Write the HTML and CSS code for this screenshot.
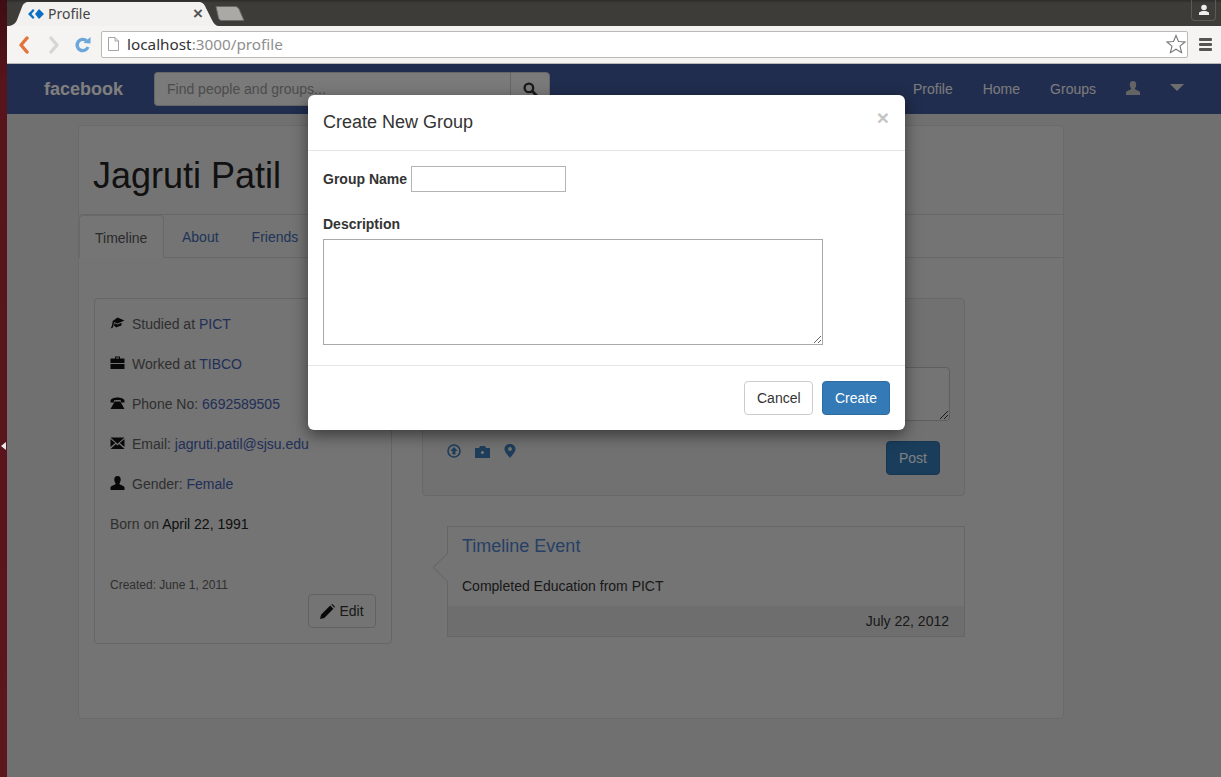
FILE: index.html
```html
<!DOCTYPE html>
<html lang="en">
<head>
<meta charset="utf-8">
<title>Profile</title>
<link rel="stylesheet" href="styles.css">
</head>
<body>
<div class="desktop">
  <aside class="launcher"><span class="launcher-arrow"></span></aside>
  <div class="browser">
    <div class="tabstrip">
      <div class="tab">
        <svg class="tab-shape" width="212" height="26" viewBox="0 0 212 26"><path d="M0 26 C5 26 8 24 10 20 L15 7 C16 4 18 2 22 2 L192 2 C195 2 197 4 198 6 L205 20 C207 24 209 26 212 26 Z" fill="#f2f1f0"/></svg>
        <svg class="favicon" width="16" height="12" viewBox="0 0 16 12"><path d="M0 6 L5 1 L6.5 2.5 L3.5 6 L6.5 9.5 L5 11 Z" fill="#0a6fc4"/><path d="M7 6 L11 1 L16 6 L11 11 Z" fill="#0a6fc4"/></svg>
        <span class="tab-title">Profile</span>
        <span class="tab-close">×</span>
      </div>
      <svg class="newtab" width="30" height="15" viewBox="0 0 30 15"><path d="M1 .5 L20 .5 C22 .5 23 1.5 24 3 L29 14.5 L7 14.5 C5 14.5 4 13.5 3.5 12 Z" fill="#aaa9a6" stroke="#6a6966"/></svg>
      <div class="profile-btn">
        <svg width="12" height="12" viewBox="0 0 12 12"><circle cx="6" cy="3.5" r="2.8" fill="#eee"/><path d="M1 11 L1 8.5 L4 7 L8 7 L11 8.5 L11 11 Z" fill="#eee"/></svg>
      </div>
    </div>
    <div class="toolbar">
      <svg class="tool-icon" width="14" height="18" viewBox="0 0 14 18"><path d="M10 2 L4 9 L10 16" fill="none" stroke="#e2733a" stroke-width="3.4" stroke-linejoin="round" stroke-linecap="round"/></svg>
      <svg class="tool-icon" width="14" height="18" viewBox="0 0 14 18"><path d="M4 2 L10 9 L4 16" fill="none" stroke="#d8d6d3" stroke-width="3.4" stroke-linejoin="round" stroke-linecap="round"/></svg>
      <svg class="tool-icon reload" width="17" height="18" viewBox="0 0 17 18"><path d="M14 11 A5.6 5.6 0 1 1 12.5 4.8" fill="none" stroke="#6ba6dc" stroke-width="3.4"/><path d="M9.5 7 L16.5 7.5 L16.5 1 Z" fill="#6ba6dc"/></svg>
      <div class="omnibox">
        <svg class="page-icon" width="11" height="14" viewBox="0 0 11 14"><path d="M.5.5 H7 L10.5 4 V13.5 H.5 Z" fill="#fff" stroke="#a5a5a5"/><path d="M7 .5 V4 H10.5" fill="none" stroke="#a5a5a5"/></svg>
        <span class="url"><span class="url-host">localhost</span>:3000/profile</span>
        <svg class="star" width="20" height="20" viewBox="0 0 20 20"><path d="M10 1.5 L12.5 7.5 L19 8 L14 12.2 L15.6 18.6 L10 15.2 L4.4 18.6 L6 12.2 L1 8 L7.5 7.5 Z" fill="#fff" stroke="#777" stroke-width="1.1"/></svg>
      </div>
      <div class="menu-btn"><span></span><span></span><span></span></div>
    </div>
    <div class="page">
      <nav class="navbar">
        <a class="brand">facebook</a>
        <div class="search">
          <div class="search-input">Find people and groups...</div>
          <div class="search-btn">
            <svg width="15" height="15" viewBox="0 0 14 14"><circle cx="5.5" cy="5.5" r="4" fill="none" stroke="#333" stroke-width="2.2"/><path d="M8.5 8.5 L13 13" stroke="#333" stroke-width="2.6"/></svg>
          </div>
        </div>
        <div class="nav-links">
          <a>Profile</a>
          <a>Home</a>
          <a>Groups</a>
          <svg width="14" height="14" viewBox="0 0 14 14"><path d="M7 0 C9.5 0 10.4 2 10.2 4 C10 6 9.2 7 8.8 7.8 C8.8 9 13.8 9.6 14 11.5 L14 14 L0 14 L0 11.5 C.2 9.6 5.2 9 5.2 7.8 C4.8 7 4 6 3.8 4 C3.6 2 4.5 0 7 0 Z" fill="#c8c8c8"/></svg>
          <span class="caret"></span>
        </div>
      </nav>
      <main class="card">
        <h1 class="name">Jagruti Patil</h1>
        <div class="tabs">
          <a class="tab-link active">Timeline</a>
          <a class="tab-link">About</a>
          <a class="tab-link">Friends</a>
        </div>
        <div class="columns">
          <section class="info">
            <div class="info-row">
              <svg class="glyph" width="15" height="14" viewBox="0 0 14 14"><path d="M7 1.5 L14 4.5 L7 7.5 L3.5 6 L3 9.5 L2.4 11.5 L.2 12.5 L1.5 9.5 L2.2 5 Z" fill="#111"/><path d="M4 7 L7 8.5 L11 6.8 L11 9.5 C9 10 7 10.8 5.5 11.5 C5 10.5 4.5 10.2 3.6 10 Z" fill="#111"/></svg>
              <span>Studied at <a>PICT</a></span>
            </div>
            <div class="info-row">
              <svg class="glyph" width="15" height="14" viewBox="0 0 14 14"><path d="M4.5 2.5 V.5 H9.5 V2.5 H8.5 V1.5 H5.5 V2.5 Z M0 2.5 H14 V7 H0 Z M0 8 H14 V13 H0 Z" fill="#111"/></svg>
              <span>Worked at <a>TIBCO</a></span>
            </div>
            <div class="info-row">
              <svg class="glyph" width="15" height="14" viewBox="0 0 14 14"><path d="M0 4.5 C1 .5 13 .5 14 4.5 L14 6.5 L10.5 6.5 L10.5 4.5 C9 3.8 5 3.8 3.5 4.5 L3.5 6.5 L0 6.5 Z M4.2 5.5 L9.8 5.5 L14 13 L0 13 Z" fill="#111"/></svg>
              <span>Phone No: <a>6692589505</a></span>
            </div>
            <div class="info-row">
              <svg class="glyph" width="15" height="14" viewBox="0 0 14 14"><path d="M0 1.5 H14 L7 7.8 Z M0 3 L4.7 7 L0 11 Z M14 3 L9.3 7 L14 11 Z M5.5 8 L7 9.4 L8.5 8 L14 13 H0 Z" fill="#111"/></svg>
              <span>Email: <a>jagruti.patil@sjsu.edu</a></span>
            </div>
            <div class="info-row">
              <svg class="glyph" width="15" height="14" viewBox="0 0 14 14"><path d="M7 0 C9.5 0 10.4 2 10.2 4 C10 6 9.2 7 8.8 7.8 C8.8 9 13.8 9.6 14 11.5 L14 14 L0 14 L0 11.5 C.2 9.6 5.2 9 5.2 7.8 C4.8 7 4 6 3.8 4 C3.6 2 4.5 0 7 0 Z" fill="#111"/></svg>
              <span>Gender: <a>Female</a></span>
            </div>
            <div class="info-row">
              <span>Born on <strong class="dark">April 22, 1991</strong></span>
            </div>
            <div class="created">Created: June 1, 2011</div>
            <div class="edit-row">
              <button class="edit-btn">
                <svg width="15" height="15" viewBox="0 0 14 14"><path d="M0 14 L1 10 L9.5 1.5 L12.5 4.5 L4 13 Z M10.5 .5 L11.5 0 L14 2.5 L13.5 3.5 Z" fill="#111"/></svg>
                Edit
              </button>
            </div>
          </section>
          <div class="feed">
            <section class="composer">
              <div class="composer-text">
                <svg class="resize-grip" width="8" height="8" viewBox="0 0 8 8"><path d="M0 8 L8 0 M4 8 L8 4" stroke="#333" fill="none"/></svg>
              </div>
              <div class="composer-actions">
                <div class="composer-icons">
                  <svg width="14" height="14" viewBox="0 0 14 14"><circle cx="7" cy="7" r="6" fill="none" stroke="#3a7ab5" stroke-width="1.6"/><path d="M7 3 L10.5 7 H8.5 V10.5 H5.5 V7 H3.5 Z" fill="#3a7ab5"/></svg>
                  <svg width="15" height="13" viewBox="0 0 15 13"><path d="M0 3 H4 L5 1 H10 L11 3 H15 V13 H0 Z" fill="#3a7ab5"/><circle cx="7.5" cy="7.5" r="2" fill="#f0f0f0" stroke="#3a7ab5"/></svg>
                  <svg width="12" height="14" viewBox="0 0 12 14"><path d="M6 0 C9.5 0 11.5 2.5 11.5 5 C11.5 8 8 11.5 6 14 C4 11.5 .5 8 .5 5 C.5 2.5 2.5 0 6 0 Z M6 3 A2 2 0 1 0 6 7 A2 2 0 1 0 6 3 Z" fill="#3a7ab5" fill-rule="evenodd"/></svg>
                </div>
                <button class="post-btn">Post</button>
              </div>
            </section>
            <article class="event">
              <h3 class="event-title">Timeline Event</h3>
              <p class="event-text">Completed Education from PICT</p>
              <div class="event-foot">July 22, 2012</div>
            </article>
          </div>
        </div>
      </main>
      <div class="backdrop"></div>
      <div class="modal">
        <header class="modal-head">
          <h4 class="modal-title">Create New Group</h4>
          <span class="modal-close">×</span>
        </header>
        <div class="modal-body">
          <div class="field-inline">
            <label class="label">Group Name</label>
            <input class="text-input" type="text">
          </div>
          <label class="label desc-label">Description</label>
          <textarea class="desc-input"></textarea>
        </div>
        <footer class="modal-foot">
          <button class="btn btn-default">Cancel</button>
          <button class="btn btn-primary">Create</button>
        </footer>
      </div>
    </div>
  </div>
</div>
</body>
</html>
```
FILE: styles.css
```css
* { box-sizing: border-box; }
html, body { margin: 0; height: 100%; overflow: hidden; }
body { font-family: "Liberation Sans", Arial, sans-serif; font-size: 14px; line-height: 20px; color: #333; }
a { text-decoration: none; }
button { font-family: inherit; }

.desktop { display: flex; height: 777px; width: 1221px; }
.launcher { width: 7px; flex: none; display: flex; align-items: center; background: linear-gradient(#3e0d13 0, #57141b 80px, #5c161d 100%); }
.launcher-arrow { width: 0; height: 0; margin: 114px 0 0 1px; border: 4px solid transparent; border-left: 0; border-right: 5px solid #e8e8e8; }
.browser { flex: 1; min-width: 0; display: flex; flex-direction: column; }

.tabstrip { height: 26px; flex: none; display: flex; align-items: flex-end; background: linear-gradient(#2e2c28 0, #3e3c38 3px); position: relative; }
.tab { width: 212px; height: 26px; display: flex; align-items: center; position: relative; padding: 2px 0 0 21px; flex: none; }
.tab-shape { position: absolute; left: 0; top: 0; }
.favicon { position: relative; margin-right: 4px; }
.tab-title { position: relative; font-family: "Noto Sans", sans-serif; font-size: 14px; color: #444; flex: 1; }
.tab-close { position: relative; margin-right: 16px; font-size: 17px; font-weight: bold; color: #555; }
.newtab { margin: 0 0 5px -4px; flex: none; }
.profile-btn { position: absolute; right: 5px; top: 0; width: 25px; height: 21px; border: 1px solid #5c5a55; border-top: 0; border-radius: 0 0 4px 4px; display: flex; align-items: center; justify-content: center; }

.toolbar { height: 38px; flex: none; display: flex; align-items: center; background: #f5f4f3; border-bottom: 1px solid #b8b8b8; padding: 0 9px 0 10px; }
.tool-icon { flex: none; margin-right: 16px; }
.reload { margin-right: 10px; margin-left: -3px; }
.omnibox { flex: 1; height: 27px; margin-top: -1px; background: #fff; border: 1px solid #b9b9b9; border-radius: 2px; display: flex; align-items: center; padding: 0 1px 0 6px; }
.page-icon { flex: none; margin-right: 8px; }
.url { flex: 1; font-family: "Noto Sans", sans-serif; font-size: 15.3px; color: #8f8f8f; }
.url-host { color: #333; }
.star { flex: none; }
.menu-btn { width: 13px; margin-left: 11px; display: flex; flex-direction: column; gap: 2px; flex: none; }
.menu-btn span { display: block; height: 3px; background: #555; border-radius: 1px; }

.page { flex: 1; position: relative; background: #e0e0e0; overflow: hidden; min-height: 0; }
.navbar { height: 50px; background: #425a9c; display: flex; align-items: center; padding: 0 37px; }
.brand { font-size: 18px; font-weight: bold; color: #fff; width: 110px; flex: none; }
.search { display: flex; width: 396px; height: 34px; flex: none; }
.search-input { flex: 1; background: #f4f4f4; border-radius: 4px 0 0 4px; padding: 7px 12px; color: #999; border: 1px solid #ccc; border-right: 0; line-height: 18px; }
.search-btn { width: 40px; background: #f4f4f4; border: 1px solid #ccc; border-radius: 0 4px 4px 0; display: flex; align-items: center; justify-content: center; }
.nav-links { margin-left: auto; display: flex; align-items: center; gap: 30px; color: #fff; }
.nav-links a { color: #fff; opacity: .95; }
.nav-links svg { margin-top: -2px; }
.caret { width: 0; height: 0; border: 7px solid transparent; border-top: 7px solid #ddd; border-bottom: 0; margin-top: -4px; }

.card { margin: 11px 0 0 71px; width: 986px; height: 594px; background: #e8e8e8; border: 1px solid #d4d4d4; border-radius: 4px; }
.name { margin: 0; height: 89px; padding: 30px 0 0 14px; border-bottom: 1px solid #d0d0d0; font-size: 36px; font-weight: normal; line-height: 40px; color: #222; }
.tabs { height: 43px; display: flex; align-items: flex-end; border-bottom: 1px solid #d0d0d0; }
.tab-link { height: 42px; padding: 12px 15px 0; margin-right: 3px; color: #4068b0; }
.tab-link.active { width: 85px; color: #555; background: #ebebeb; border: 1px solid #d0d0d0; border-bottom: 0; border-radius: 4px 4px 0 0; height: 43px; margin-bottom: -1px; }
.columns { display: flex; padding: 40px 0 0 15px; gap: 30px; align-items: flex-start; }

.info { width: 298px; height: 346px; flex: none; padding: 15px; border: 1px solid #cccccc; border-radius: 4px; color: #5e5e5e; }
.info-row { display: flex; align-items: center; gap: 7px; margin-bottom: 20px; }
.info-row a { color: #4360b0; }
.glyph { flex: none; margin-top: -2px; }
.dark { font-weight: normal; color: #222; }
.created { font-size: 12px; line-height: 16px; margin-top: 43px; color: #5e5e5e; }
.edit-row { display: flex; justify-content: flex-end; margin-top: 1px; }
.edit-btn { height: 34px; width: 68px; background: transparent; border: 1px solid #c4c4c4; border-radius: 4px; font-size: 14px; color: #333; display: flex; align-items: center; justify-content: center; gap: 4px; padding: 0; }

.feed { width: 543px; flex: none; }
.composer { height: 198px; background: #e2e2e2; border: 1px solid #d0d0d0; border-radius: 4px; padding: 68px 14px 0 14px; }
.composer-text { height: 54px; background: #e8e8e8; border: 1px solid #bcbcbc; border-radius: 4px; position: relative; }
.resize-grip { position: absolute; right: 1px; bottom: 1px; }
.composer-actions { display: flex; justify-content: space-between; align-items: flex-start; padding: 0 10px; margin-top: 20px; }
.composer-icons { display: flex; gap: 14px; align-items: center; padding-top: 3px; }
.post-btn { width: 54px; height: 34px; background: #337ab7; border: 1px solid #2e6da4; border-radius: 4px; color: #fff; font-size: 14px; padding: 0; }

.event { margin: 30px 0 0 25px; height: 111px; border: 1px solid #cccccc; position: relative; display: flex; flex-direction: column; background: #e8e8e8; }
.event::before { content: ""; position: absolute; left: -11px; top: 30px; width: 20px; height: 20px; background: #e8e8e8; border-left: 1px solid #cccccc; border-bottom: 1px solid #cccccc; transform: rotate(45deg); }
.event-title { margin: 0; padding: 9px 14px 0; font-size: 18px; font-weight: normal; line-height: 20px; color: #4c80cc; }
.event-text { margin: 0; padding: 20px 14px 0; flex: 1; color: #333; }
.event-foot { height: 30px; line-height: 30px; padding: 0 15px; background: #dcdcdc; text-align: right; color: #333; }

.backdrop { position: absolute; inset: 0; background: rgba(0, 0, 0, .5); }
.modal { position: absolute; left: 301px; top: 31px; width: 597px; height: 335px; background: #fff; border-radius: 6px; box-shadow: 0 5px 15px rgba(0, 0, 0, .5); display: flex; flex-direction: column; }
.modal-head { height: 56px; flex: none; border-bottom: 1px solid #e5e5e5; padding: 15px; display: flex; justify-content: space-between; }
.modal-title { margin: 0; font-size: 18px; font-weight: normal; line-height: 24px; color: #333; }
.modal-close { font-size: 21px; font-weight: bold; line-height: 15px; color: #c4c4c4; margin-right: 1px; }
.modal-body { flex: 1; padding: 15px; display: flex; flex-direction: column; align-items: flex-start; }
.field-inline { display: flex; align-items: center; gap: 4px; }
.label { font-weight: bold; color: #333; }
.text-input { width: 155px; height: 26px; border: 1px solid #b4b4b4; padding: 1px 2px; background: #fff; }
.desc-label { margin-top: 22px; }
.desc-input { width: 500px; height: 106px; margin-top: 5px; border: 1px solid #a9a9a9; padding: 2px; background: #fff; display: block; }
.modal-foot { height: 65px; flex: none; border-top: 1px solid #e5e5e5; padding: 15px; display: flex; justify-content: flex-end; gap: 9px; }
.btn { height: 34px; border-radius: 4px; font-size: 14px; padding: 0 12px; }
.btn-default { background: #fff; border: 1px solid #ccc; color: #333; width: 69px; }
.btn-primary { background: #337ab7; border: 1px solid #2e6da4; color: #fff; width: 68px; }
```
